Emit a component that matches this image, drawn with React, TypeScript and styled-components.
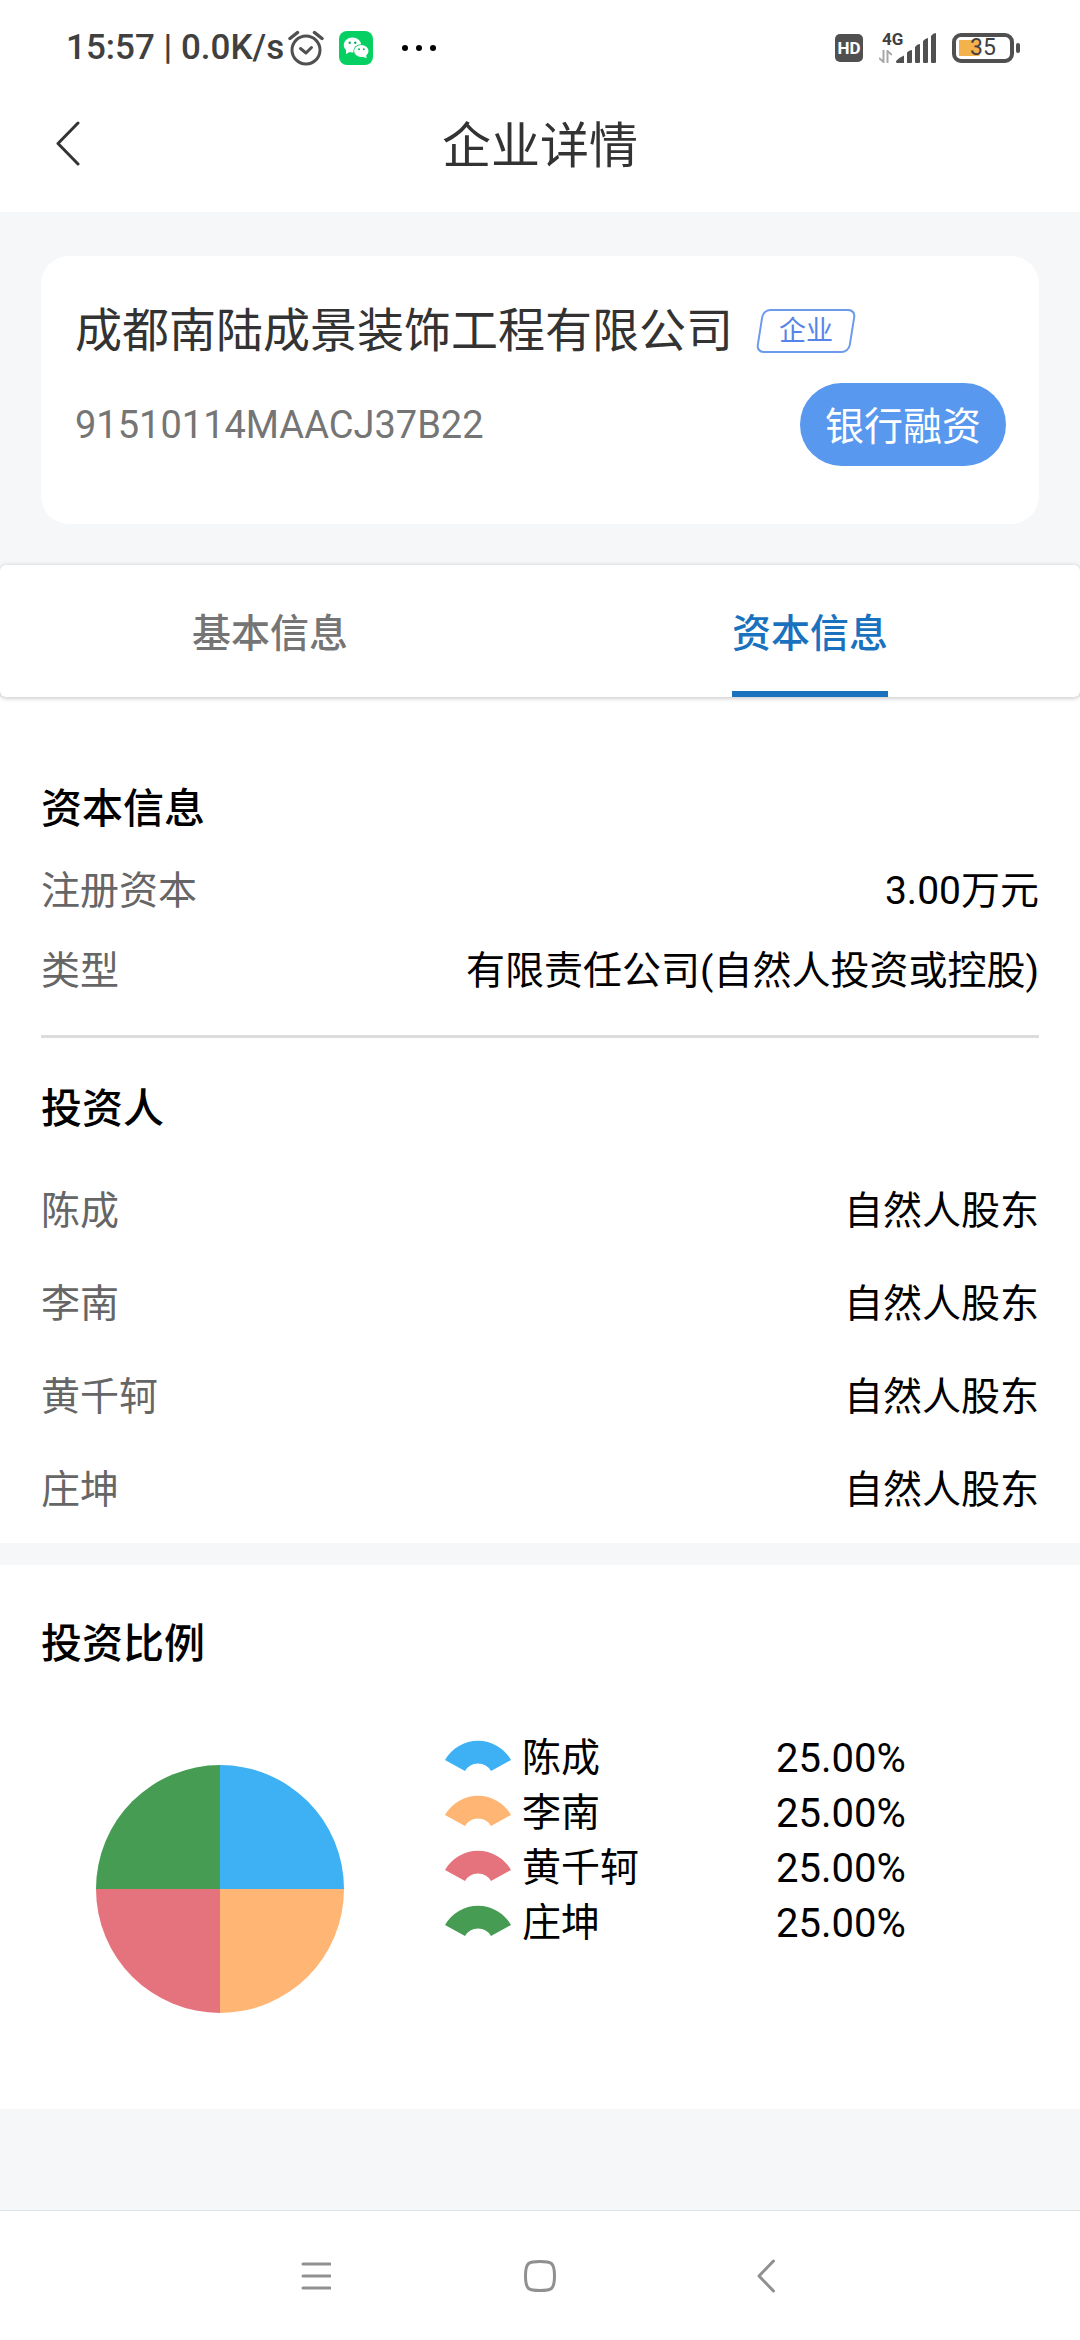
import React, { useState } from 'react';
import styled, { createGlobalStyle } from 'styled-components';

const GlobalStyle = createGlobalStyle`
  *, *::before, *::after { box-sizing: border-box; }
  html, body, #root { min-height: 100vh; }
  body {
    margin: 0;
    background: #f5f7f9;
    color: #000;
    font-family: Roboto, "Noto Sans CJK SC", sans-serif;
    font-size: 39px;
  }
  button { font: inherit; border: 0; padding: 0; background: none; cursor: pointer; }
  h1, h2, p, dl, dt, dd, ul { margin: 0; padding: 0; }
  svg { display: block; }
`;

const Page = styled.div`
  min-height: 100vh;
  display: flex;
  flex-direction: column;
`;

/* ---------- status bar ---------- */

const StatusBar = styled.div`
  display: flex;
  align-items: center;
  justify-content: space-between;
  height: 78px;
  padding: 17px 60px 0 66px;
  background: #fff;
  color: #404040;
`;

const StatusGroup = styled.div<{ $gap: number }>`
  display: flex;
  align-items: center;
  gap: ${(p) => p.$gap}px;
`;

const Clock = styled.span`
  font-size: 35px;
  line-height: 40px;
  font-weight: 500;
  white-space: pre;
`;

const HdBadge = styled.span`
  display: grid;
  place-items: center;
  width: 28px;
  height: 28px;
  border-radius: 5px;
  background: #505050;
  color: #fff;
  font-size: 17px;
  line-height: 28px;
  font-weight: 700;
`;

const Network = styled.div`
  display: flex;
  align-items: flex-end;
`;

const NetworkType = styled.div`
  display: flex;
  flex-direction: column;
  align-items: flex-start;
  gap: 4px;
  width: 17px;
  font-size: 17px;
  line-height: 14px;
  font-weight: 700;

  span { padding-left: 3px; }
`;

const Battery = styled.div`
  display: flex;
  align-items: center;
  gap: 2px;

  &::after {
    content: '';
    width: 4px;
    height: 10px;
    border-radius: 2px;
    background: #505050;
  }
`;

const BatteryShell = styled.div<{ $level: number }>`
  display: grid;
  place-items: center;
  width: 62px;
  height: 30px;
  border: 4px solid #505050;
  border-radius: 9px;
  padding: 3px;
  background: linear-gradient(#f3b24b, #f3b24b) 3px center / ${(p) => p.$level}% 16px no-repeat;
  font-size: 23px;
  line-height: 16px;
`;

/* ---------- title bar ---------- */

const TitleBar = styled.header`
  display: grid;
  grid-template-columns: 1fr auto 1fr;
  align-items: center;
  height: 134px;
  padding: 0 54px;
  background: #fff;
`;

const Title = styled.h1`
  padding-top: 3px;
  font-size: 49px;
  line-height: 72px;
  font-weight: 400;
  color: #333;
`;

const IconButton = styled.button`
  display: grid;
  place-items: center;
  justify-self: start;
`;

/* ---------- company card ---------- */

const Card = styled.section`
  display: flex;
  flex-direction: column;
  gap: 16px;
  margin: 44px 41px 41px;
  padding: 39px 33px 58px 34px;
  border-radius: 28px;
  background: #fff;
`;

const CardRow = styled.div<{ $between?: boolean }>`
  display: flex;
  align-items: center;
  justify-content: ${(p) => (p.$between ? 'space-between' : 'flex-start')};
  gap: 26px;
`;

const Company = styled.h2`
  font-size: 47px;
  line-height: 72px;
  font-weight: 400;
  color: #333;
`;

const Tag = styled.span`
  display: grid;
  place-items: center;
  width: 94px;
  height: 44px;
  font-size: 27px;
  line-height: 40px;
  color: #5585e8;
  position: relative;

  &::before {
    content: '';
    position: absolute;
    inset: 0;
    border: 2px solid #6c9bee;
    border-radius: 8px;
    transform: skewX(-9deg);
  }
`;

const CreditCode = styled.p`
  font-size: 38px;
  line-height: 48px;
  color: #757575;
`;

const LoanButton = styled.button`
  height: 83px;
  padding: 0 25px 4px;
  border-radius: 42px;
  background: #5898ee;
  color: #fff;
`;

/* ---------- tabs ---------- */

const Tabs = styled.div`
  display: grid;
  grid-template-columns: 1fr 1fr;
  height: 132px;
  border-radius: 6px;
  background: #fff;
  box-shadow: 0 1px 5px rgba(0, 0, 0, 0.25);
  position: relative;
`;

const Tab = styled.button<{ $active: boolean }>`
  justify-self: center;
  padding: 4px 0 0;
  border-bottom: 6px solid ${(p) => (p.$active ? '#1a72bf' : 'transparent')};
  color: ${(p) => (p.$active ? '#1a72bf' : '#757575')};
  font-weight: 500;
`;

/* ---------- detail sections ---------- */

const Panel = styled.section`
  padding: 82px 41px 6px;
  background: #fff;
`;

const RatioPanel = styled(Panel)`
  margin-top: 22px;
  padding: 49px 41px 96px;
`;

const Heading = styled.h2`
  font-size: 41px;
  line-height: 60px;
  font-weight: 500;
`;

const Rows = styled.dl<{ $top: number }>`
  margin-top: ${(p) => p.$top}px;
`;

const Row = styled.div<{ $height: number }>`
  display: flex;
  justify-content: space-between;
  line-height: ${(p) => p.$height}px;

  dt { color: #666; }
`;

const Divider = styled.hr`
  height: 3px;
  margin: 24px 0 41px;
  border: 0;
  background: #dcdcdc;
`;

/* ---------- chart ---------- */

const ChartArea = styled.div`
  display: flex;
  align-items: flex-start;
  margin-top: 57px;
  padding-left: 55px;
`;

const PieBox = styled.div`
  padding-top: 34px;
  margin-right: 101px;
`;

const Legend = styled.ul`
  list-style: none;
`;

const LegendItem = styled.li`
  display: grid;
  grid-template-columns: 66px 243px auto;
  column-gap: 11px;
  align-items: center;
  line-height: 55px;

  svg { margin-bottom: 5px; }
`;

const Share = styled.span`
  font-size: 40px;
`;

/* ---------- system navigation ---------- */

const NavBar = styled.nav`
  display: grid;
  grid-template-columns: repeat(3, 225px);
  justify-content: center;
  height: 130px;
  margin-top: auto;
  border-top: 1px solid #dfe2e5;
  background: #fff;
`;

const NavButton = styled.button`
  display: grid;
  place-items: center;
`;

const HOLDERS = [
  { name: '陈成', kind: '自然人股东', share: 25, color: '#3eb0f4' },
  { name: '李南', kind: '自然人股东', share: 25, color: '#ffb573' },
  { name: '黄千轲', kind: '自然人股东', share: 25, color: '#e5737e' },
  { name: '庄坤', kind: '自然人股东', share: 25, color: '#469c53' },
];

const TABS = ['基本信息', '资本信息'];

function AlarmIcon() {
  return (
    <svg width="36" height="36" viewBox="0 0 36 36" fill="none" stroke="#505050" strokeLinecap="round" strokeLinejoin="round">
      <circle cx="18" cy="20" r="14" strokeWidth="3" />
      <path d="M12.5 18.5 18 23l5.500-5.500" strokeWidth="3" />
      <path d="M2 8.500 9.500 2.500M34 8.500 26.500 2.500" strokeWidth="3.500" />
    </svg>
  );
}

function WechatIcon() {
  return (
    <svg width="34" height="34" viewBox="0 0 34 34">
      <rect width="34" height="34" rx="8" fill="#07d063" />
      <ellipse cx="13.500" cy="14" rx="8.800" ry="7.500" fill="#fff" />
      <path d="M7 19v4l4.500-2.500z" fill="#fff" />
      <ellipse cx="22.300" cy="20" rx="8" ry="6.800" fill="#07d063" />
      <ellipse cx="22.300" cy="20" rx="7.200" ry="6" fill="#fff" />
      <path d="M23 25.500l4.500 1.800-.5-4z" fill="#fff" />
      <g fill="#07b457">
        <circle cx="10.700" cy="11.800" r="1.200" />
        <circle cx="16.300" cy="11.800" r="1.200" />
        <circle cx="20" cy="18.300" r="1" />
        <circle cx="24.800" cy="18.300" r="1" />
      </g>
    </svg>
  );
}

function DotsIcon() {
  return (
    <svg width="34" height="8" viewBox="0 0 34 8">
      <circle cx="3" cy="4" r="3" />
      <circle cx="17" cy="4" r="3" />
      <circle cx="31" cy="4" r="3" />
    </svg>
  );
}

function DataArrows() {
  return (
    <svg width="13" height="13" viewBox="0 0 13 13" fill="none" stroke="#a8a8a8" strokeWidth="2">
      <path d="M4.500 0v12L0 8M8.500 13V1L13 5" />
    </svg>
  );
}

function SignalBars() {
  return (
    <svg width="40" height="30" viewBox="0 0 40 30" fill="#505050">
      <path d="M0 28q4-4 8-5.500V30H1q-1 0-1-2z" />
      <path d="M11 19.500q2-2.500 5-2.500v12q0 1-1 1h-4zM19 14q2-3 5-3v18q0 1-1 1h-3q-1 0-1-1z" />
      <path d="M27 8q2-2.500 5-3v24q0 1-1 1h-3q-1 0-1-1zM35 3q2-3 5-3v29q0 1-1 1h-3q-1 0-1-1z" />
    </svg>
  );
}

function FanMarker({ color }: { color: string }) {
  return (
    <svg width="66" height="32" viewBox="0 0 66 32">
      <path d="M0 20A38 38 0 0 1 66 20L46 31A15 15 0 0 0 20 31Z" fill={color} />
    </svg>
  );
}

function Pie() {
  const r = 124;
  let turn = 0;
  const point = (t: number) => {
    const a = t * 2 * Math.PI;
    return `${r + r * Math.sin(a)} ${r - r * Math.cos(a)}`;
  };
  return (
    <svg width={r * 2} height={r * 2} role="img" aria-label="投资比例">
      {HOLDERS.map((h) => {
        const start = turn;
        turn += h.share / 100;
        return <path key={h.name} fill={h.color} d={`M${r} ${r}L${point(start)}A${r} ${r} 0 0 1 ${point(turn)}Z`} />;
      })}
    </svg>
  );
}

export default function App() {
  const [tab, setTab] = useState(1);

  return (
    <Page>
      <GlobalStyle />
      <StatusBar>
        <StatusGroup $gap={15}>
          <StatusGroup $gap={4}>
            <Clock>15:57 | 0.0K/s</Clock>
            <AlarmIcon />
          </StatusGroup>
          <StatusGroup $gap={29}>
            <WechatIcon />
            <DotsIcon />
          </StatusGroup>
        </StatusGroup>
        <StatusGroup $gap={16}>
          <HdBadge>HD</HdBadge>
          <Network>
            <NetworkType>
              <span>4G</span>
              <DataArrows />
            </NetworkType>
            <SignalBars />
          </Network>
          <Battery>
            <BatteryShell $level={38}>35</BatteryShell>
          </Battery>
        </StatusGroup>
      </StatusBar>

      <TitleBar>
        <IconButton aria-label="返回">
          <svg width="28" height="48" viewBox="0 0 28 48" fill="none" stroke="#333" strokeWidth="3" strokeLinecap="round" strokeLinejoin="round">
            <path d="M24 2 4 22.500 24 43" />
          </svg>
        </IconButton>
        <Title>企业详情</Title>
      </TitleBar>

      <Card>
        <CardRow>
          <Company>成都南陆成景装饰工程有限公司</Company>
          <Tag>企业</Tag>
        </CardRow>
        <CardRow $between>
          <CreditCode>91510114MAACJ37B22</CreditCode>
          <LoanButton>银行融资</LoanButton>
        </CardRow>
      </Card>

      <Tabs role="tablist">
        {TABS.map((label, i) => (
          <Tab key={label} role="tab" aria-selected={tab === i} $active={tab === i} onClick={() => setTab(i)}>
            {label}
          </Tab>
        ))}
      </Tabs>

      <Panel>
        <Heading>资本信息</Heading>
        <Rows $top={12}>
          <Row $height={80}>
            <dt>注册资本</dt>
            <dd>3.00万元</dd>
          </Row>
          <Row $height={80}>
            <dt>类型</dt>
            <dd>有限责任公司(自然人投资或控股)</dd>
          </Row>
        </Rows>
        <Divider />
        <Heading>投资人</Heading>
        <Rows $top={26}>
          {HOLDERS.map((h) => (
            <Row key={h.name} $height={93}>
              <dt>{h.name}</dt>
              <dd>{h.kind}</dd>
            </Row>
          ))}
        </Rows>
      </Panel>

      <RatioPanel>
        <Heading>投资比例</Heading>
        <ChartArea>
          <PieBox>
            <Pie />
          </PieBox>
          <Legend>
            {HOLDERS.map((h) => (
              <LegendItem key={h.name}>
                <FanMarker color={h.color} />
                <span>{h.name}</span>
                <Share>{h.share.toFixed(2)}%</Share>
              </LegendItem>
            ))}
          </Legend>
        </ChartArea>
      </RatioPanel>

      <NavBar>
        <NavButton aria-label="最近任务">
          <svg width="32" height="32" viewBox="0 0 32 32" stroke="#909090" strokeWidth="3" strokeLinecap="round">
            <path d="M4 4h27M4 16h27M4 28h27" />
          </svg>
        </NavButton>
        <NavButton aria-label="主屏幕">
          <svg width="32" height="32" viewBox="0 0 32 32" fill="none" stroke="#909090" strokeWidth="3">
            <path d="M16 1.500c11 0 14.500.5 14.500 14.500S27 30.500 16 30.500 1.500 30 1.500 16 5 1.500 16 1.500z" />
          </svg>
        </NavButton>
        <NavButton aria-label="返回上一页">
          <svg width="20" height="34" viewBox="0 0 20 34" fill="none" stroke="#909090" strokeWidth="3" strokeLinecap="round" strokeLinejoin="round">
            <path d="M18.500 2 4 17l14.500 15" />
          </svg>
        </NavButton>
      </NavBar>
    </Page>
  );
}
